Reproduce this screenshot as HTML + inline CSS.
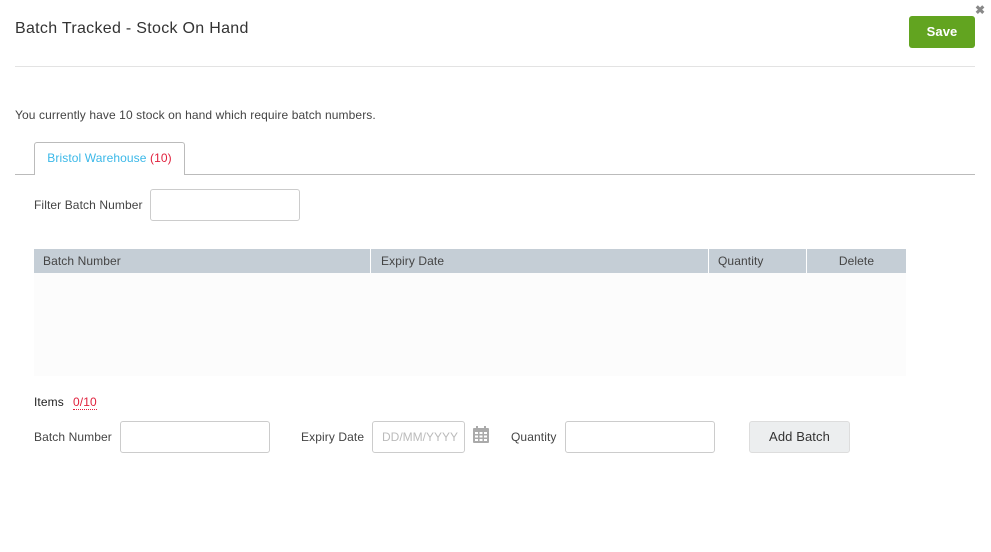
<!DOCTYPE html>
<html><head><style>
*{box-sizing:border-box;margin:0;padding:0}
body{width:991px;height:552px;background:#fff;font-family:"Liberation Sans",sans-serif;color:#444;position:relative;overflow:hidden;font-size:12px;letter-spacing:0.1px}
.a{position:absolute}
input{position:absolute;border:1px solid #ccc;border-radius:3px;background:#fff;height:32px;font-family:"Liberation Sans",sans-serif;font-size:12px;padding-left:9px;color:#bbb}
</style></head><body>
<div class="a" style="left:15px;top:20px;font-size:16px;color:#333;letter-spacing:0.3px">Batch Tracked - Stock On Hand</div>
<div class="a" style="left:975px;top:3px;font-size:12px;color:#888;font-weight:bold">✖</div>
<div class="a" style="left:909px;top:16px;width:66px;height:32px;background:#62a420;border-radius:3px;color:#fff;font-weight:bold;font-size:13px;text-align:center;line-height:32px">Save</div>
<div class="a" style="left:15px;top:66px;width:960px;height:1px;background:#e3e3e3"></div>
<div class="a" style="left:15px;top:108px;color:#444">You currently have 10 stock on hand which require batch numbers.</div>
<div class="a" style="left:15px;top:174px;width:960px;height:1px;background:#bbb"></div>
<div class="a" style="left:34px;top:142px;width:151px;height:33px;border:1px solid #bbb;border-bottom:none;background:#fff;border-radius:3px 3px 0 0;text-align:center;line-height:31px;color:#3bb8e8">Bristol Warehouse <span style="color:#e0203c">(10)</span></div>
<div class="a" style="left:34px;top:198px">Filter Batch Number</div>
<input style="left:150px;top:189px;width:150px">
<div class="a" style="left:34px;top:249px;width:872px;height:24px;background:#c5ced6"></div>
<div class="a" style="left:34px;top:273px;width:872px;height:103px;background:#fcfcfc"></div>
<div class="a" style="left:370px;top:249px;width:1px;height:24px;background:#fff"></div>
<div class="a" style="left:708px;top:249px;width:1px;height:24px;background:#fff"></div>
<div class="a" style="left:806px;top:249px;width:1px;height:24px;background:#fff"></div>
<div class="a" style="left:43px;top:254px;color:#444">Batch Number</div>
<div class="a" style="left:381px;top:254px">Expiry Date</div>
<div class="a" style="left:718px;top:254px">Quantity</div>
<div class="a" style="left:807px;width:99px;top:254px;text-align:center">Delete</div>
<div class="a" style="left:34px;top:395px;color:#222">Items</div>
<div class="a" style="left:73px;top:395px;color:#e0203c;border-bottom:1px dotted #e0203c">0/10</div>
<div class="a" style="left:34px;top:430px">Batch Number</div>
<input style="left:120px;top:421px;width:150px">
<div class="a" style="left:301px;top:430px">Expiry Date</div>
<input style="left:372px;top:421px;width:93px;padding-left:9px" value="DD/MM/YYYY">
<svg class="a" style="left:472px;top:426px" width="18" height="17" viewBox="0 0 18 17"><rect x="1" y="2" width="16" height="15" rx="1" fill="#aaa"/><rect x="4" y="0" width="2" height="4" fill="#aaa"/><rect x="12" y="0" width="2" height="4" fill="#aaa"/><g fill="#fff"><rect x="3" y="6" width="3" height="2"/><rect x="7.5" y="6" width="3" height="2"/><rect x="12" y="6" width="3" height="2"/><rect x="3" y="9.5" width="3" height="2"/><rect x="7.5" y="9.5" width="3" height="2"/><rect x="12" y="9.5" width="3" height="2"/><rect x="3" y="13" width="3" height="2"/><rect x="7.5" y="13" width="3" height="2"/><rect x="12" y="13" width="3" height="2"/></g></svg>
<div class="a" style="left:511px;top:430px">Quantity</div>
<input style="left:565px;top:421px;width:150px">
<div class="a" style="left:749px;top:421px;width:101px;height:32px;background:#eceeef;border:1px solid #ddd;border-radius:3px;text-align:center;line-height:30px;font-size:13px;color:#333">Add Batch</div>
</body></html>
